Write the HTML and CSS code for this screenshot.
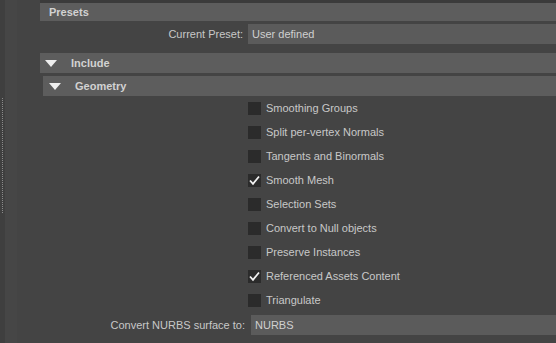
FILE: index.html
```html
<!DOCTYPE html>
<html lang="en">
<head>
    <meta charset="UTF-8">
    <title>Export Options</title>
    <link rel="stylesheet" href="styles.css">
</head>
<body>
    <div class="page">
        <!-- left dock rail -->
        <div class="rail">
            <div class="rail-dots"></div>
        </div>

        <div class="main">
            <div class="top-band"></div>

            <div class="section-head">Presets</div>
            <div class="form-row">
                <span class="form-label">Current Preset:</span>
                <div class="field">User defined</div>
            </div>

            <div class="section-head fold">
                <span class="arrow"></span>Include
            </div>
            <div class="section-head fold sub">
                <span class="arrow"></span>Geometry
            </div>

            <!-- geometry options -->
            <div class="options">
                <label class="option"><span class="box"></span>Smoothing Groups</label>
                <label class="option"><span class="box"></span>Split per-vertex Normals</label>
                <label class="option"><span class="box"></span>Tangents and Binormals</label>
                <label class="option"><span class="box checked"><svg viewBox="0 0 13 13"><path d="M2 6.5 L5 9.8 L11 2.5"/></svg></span>Smooth Mesh</label>
                <label class="option"><span class="box"></span>Selection Sets</label>
                <label class="option"><span class="box"></span>Convert to Null objects</label>
                <label class="option"><span class="box"></span>Preserve Instances</label>
                <label class="option"><span class="box checked"><svg viewBox="0 0 13 13"><path d="M2 6.5 L5 9.8 L11 2.5"/></svg></span>Referenced Assets Content</label>
                <label class="option"><span class="box"></span>Triangulate</label>
            </div>

            <div class="form-row nurbs">
                <span class="form-label">Convert NURBS surface to:</span>
                <div class="field">NURBS</div>
            </div>
        </div>
    </div>
</body>
</html>
```

FILE: styles.css
```css
* {
    margin: 0;
    padding: 0;
    box-sizing: border-box;
}

body {
    background-color: #444444;
    font-family: "Liberation Sans", Arial, sans-serif;
    font-size: 11px;
    color: #c8c8c8;
    overflow: hidden;
}

.page {
    display: flex;
    height: 343px;
}

/* rail on the far left */
.rail {
    width: 17px;
    flex-shrink: 0;
    background: linear-gradient(to right, #3f3f3f 0, #3f3f3f 5px, #464646 5px, #464646 17px);
    padding-top: 98px;
    padding-left: 2px;
}

.rail-dots {
    width: 1px;
    height: 115px;
    border-left: 1px dotted #8a8a8a;
}

.main {
    flex: 1;
    padding-left: 23px;
    display: flex;
    flex-direction: column;
}

.top-band {
    height: 3px;
    background-color: #3b3b3b;
}

/* section header bars */
.section-head {
    height: 18px;
    background-color: #5d5d5d;
    color: #d2d2d2;
    font-weight: bold;
    padding-left: 9px;
    display: flex;
    align-items: center;
}

.section-head.fold {
    height: 20px;
    margin-top: 9px;
    padding-left: 5px;
}

.section-head.sub {
    margin-top: 3px;
    margin-left: 3px;
    padding-left: 6px;
}

.arrow {
    width: 0;
    height: 0;
    border-left: 6px solid transparent;
    border-right: 6px solid transparent;
    border-top: 7px solid #eeeeee;
    margin-right: 14px;
    margin-top: 1px;
}

/* label + field rows */
.form-row {
    display: flex;
    align-items: center;
    height: 20px;
    margin-top: 3px;
}

.form-label {
    width: 203px;
    text-align: right;
    margin-right: 5px;
}

.field {
    flex: 1;
    height: 20px;
    background-color: #5b5b5b;
    padding-left: 4px;
    display: flex;
    align-items: center;
    color: #d0d0d0;
}

.form-row.nurbs .form-label {
    width: 205px;
    margin-right: 6px;
}

/* checkbox list */
.options {
    display: flex;
    flex-direction: column;
    padding-left: 208px;
}

.option {
    height: 24px;
    display: flex;
    align-items: center;
}

.box {
    width: 13px;
    height: 13px;
    background-color: #2b2b2b;
    margin-right: 5px;
    display: flex;
}

.box svg {
    width: 13px;
    height: 13px;
}

.box svg path {
    fill: none;
    stroke: #f2f2f2;
    stroke-width: 1.8;
}
```
